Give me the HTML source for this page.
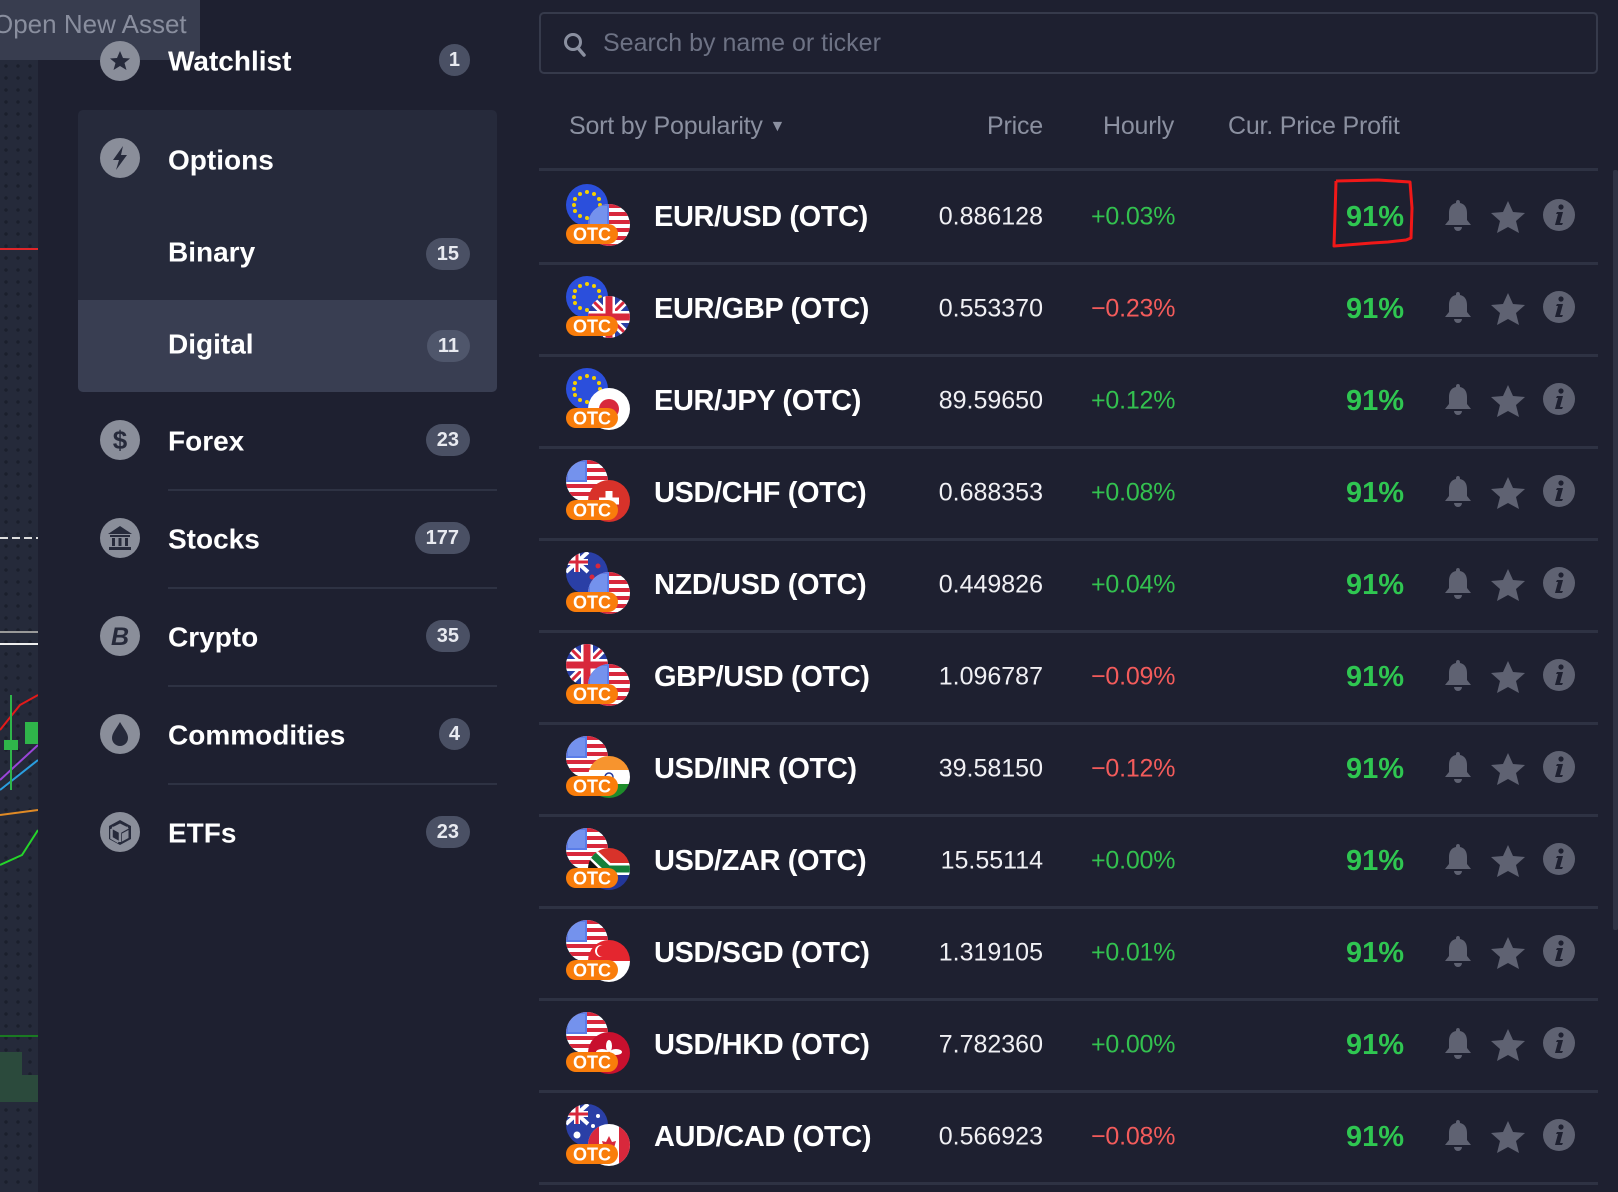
<!DOCTYPE html>
<html><head><meta charset="utf-8"><style>
*{margin:0;padding:0;box-sizing:border-box}
body{width:1618px;height:1192px;background:#1e2030;font-family:"Liberation Sans",sans-serif;position:relative;overflow:hidden;color:#fff}
.abs{position:absolute}
.strip{left:0;top:0;width:38px;height:1192px;background:#252a3a;background-image:radial-gradient(#1b1f2c 1.5px,transparent 2px);background-size:12px 12px}
.tip{left:0;top:0;width:200px;height:60px;background:#3a3f51;opacity:.95}
.tip span{position:absolute;left:-7px;top:9px;font-size:26px;color:#8f94a4;white-space:nowrap}
.opt{left:78px;top:110px;width:419px;height:282px;background:#262a3b;border-radius:5px}
.dig{left:78px;top:300px;width:419px;height:92px;background:#393e52;border-radius:0 0 5px 5px}
.si{position:absolute;left:168px;font-size:28px;font-weight:bold;color:#fff;transform:translateY(-48%)}
.ic{position:absolute;left:100px;width:40px;height:40px;transform:translateY(-50%)}
.bd{position:absolute;right:1148px;height:32px;border-radius:16px;background:#4a5064;color:#e8eaf0;font-weight:bold;font-size:20px;line-height:32px;text-align:center;padding:0 11px;transform:translateY(-50%)}
.sep{position:absolute;left:168px;width:329px;height:2px;background:#2e3243}
.search{left:539px;top:12px;width:1059px;height:62px;border:2px solid #363a4b;border-radius:5px}
.search span{position:absolute;left:62px;top:15px;font-size:25px;color:#6d7284}
.hd{position:absolute;top:112px;font-size:25px;color:#8b90a0;white-space:nowrap;letter-spacing:-0.2px}
.rsep{position:absolute;left:539px;width:1059px;height:3px;background:#2e3243}
.nm{position:absolute;left:654px;font-size:29px;font-weight:bold;transform:translateY(-46%);white-space:nowrap;letter-spacing:-0.4px}
.pr{position:absolute;right:575px;font-size:25px;transform:translateY(-46%);color:#f0f0f4}
.hr{position:absolute;left:1091px;font-size:25px;transform:translateY(-46%);letter-spacing:-0.2px}
.g{color:#33c14f}.r{color:#f35b5b}
.pf{position:absolute;right:214px;font-size:29px;font-weight:bold;color:#2fc651;transform:translateY(-46%)}
.fl{position:absolute;left:565px;width:66px;height:66px}
</style></head><body>
<svg width="0" height="0" style="position:absolute">
<defs>
<clipPath id="cc"><circle cx="21" cy="21" r="21"/></clipPath>
<symbol id="us" viewBox="0 0 42 42"><g clip-path="url(#cc)"><rect width="42" height="42" fill="#fff"/><g fill="#d8283c"><rect y="0" width="42" height="4"/><rect y="8" width="42" height="4"/><rect y="16" width="42" height="4"/><rect y="24" width="42" height="4"/><rect y="32" width="42" height="4"/><rect y="40" width="42" height="4"/></g><rect width="21" height="22" fill="#5a7de8"/><rect x="2" y="2" width="17" height="18" fill="#8ea8f2" opacity=".5"/></g></symbol>
<symbol id="eu" viewBox="0 0 42 42"><g clip-path="url(#cc)"><rect width="42" height="42" fill="#2b4fdc"/><g fill="#f5d000"><circle cx="21" cy="8" r="2"/><circle cx="28" cy="10" r="2"/><circle cx="33" cy="15" r="2"/><circle cx="34" cy="21" r="2"/><circle cx="33" cy="27" r="2"/><circle cx="28" cy="32" r="2"/><circle cx="21" cy="34" r="2"/><circle cx="14" cy="32" r="2"/><circle cx="9" cy="27" r="2"/><circle cx="8" cy="21" r="2"/><circle cx="9" cy="15" r="2"/><circle cx="14" cy="10" r="2"/></g></g></symbol>
<symbol id="gb" viewBox="0 0 42 42"><g clip-path="url(#cc)"><rect width="42" height="42" fill="#2a3fa6"/><path d="M0 0L42 42M42 0L0 42" stroke="#fff" stroke-width="8"/><path d="M0 0L42 42M42 0L0 42" stroke="#d8283c" stroke-width="3"/><path d="M21 0V42M0 21H42" stroke="#fff" stroke-width="12"/><path d="M21 0V42M0 21H42" stroke="#d8283c" stroke-width="7"/></g></symbol>
<symbol id="jp" viewBox="0 0 42 42"><g clip-path="url(#cc)"><rect width="42" height="42" fill="#fff"/><circle cx="21" cy="21" r="10" fill="#d8283c"/></g></symbol>
<symbol id="ch" viewBox="0 0 42 42"><g clip-path="url(#cc)"><rect width="42" height="42" fill="#d8322a"/><path d="M21 11V31M11 21H31" stroke="#fff" stroke-width="7"/></g></symbol>
<symbol id="nz" viewBox="0 0 42 42"><g clip-path="url(#cc)"><rect width="42" height="42" fill="#2a3fa6"/><path d="M0 0L22 20M22 0L0 20" stroke="#fff" stroke-width="4"/><path d="M11 0V20M0 10H22" stroke="#fff" stroke-width="6"/><path d="M11 0V20M0 10H22" stroke="#d8283c" stroke-width="3"/><circle cx="32" cy="14" r="2.5" fill="#d8283c"/><circle cx="26" cy="25" r="2.5" fill="#d8283c"/><circle cx="34" cy="30" r="2.5" fill="#d8283c"/></g></symbol>
<symbol id="in" viewBox="0 0 42 42"><g clip-path="url(#cc)"><rect width="42" height="14" fill="#f7942e"/><rect y="14" width="42" height="14" fill="#fff"/><rect y="28" width="42" height="14" fill="#1e8c2a"/><circle cx="21" cy="21" r="4" fill="none" stroke="#23379a" stroke-width="1.5"/></g></symbol>
<symbol id="za" viewBox="0 0 42 42"><g clip-path="url(#cc)"><rect width="42" height="21" fill="#d8322a"/><rect y="21" width="42" height="21" fill="#23379a"/><path d="M0 2L20 21L0 40M20 21H42" stroke="#fff" stroke-width="12" fill="none"/><path d="M0 2L20 21L0 40M20 21H42" stroke="#15803a" stroke-width="7" fill="none"/><path d="M0 10L11 21L0 32Z" fill="#111"/></g></symbol>
<symbol id="sg" viewBox="0 0 42 42"><g clip-path="url(#cc)"><rect width="42" height="21" fill="#e4262f"/><rect y="21" width="42" height="21" fill="#fff"/><circle cx="13" cy="11" r="6" fill="#fff"/><circle cx="15" cy="11" r="6" fill="#e4262f"/></g></symbol>
<symbol id="hk" viewBox="0 0 42 42"><g clip-path="url(#cc)"><rect width="42" height="42" fill="#c8102e"/><g fill="#fff"><ellipse cx="21" cy="14" rx="3" ry="6"/><ellipse cx="14" cy="20" rx="6" ry="3"/><ellipse cx="28" cy="20" rx="6" ry="3"/><ellipse cx="17" cy="28" rx="3" ry="5"/><ellipse cx="25" cy="28" rx="3" ry="5"/></g></g></symbol>
<symbol id="au" viewBox="0 0 42 42"><g clip-path="url(#cc)"><rect width="42" height="42" fill="#2a3fa6"/><path d="M0 0L22 20M22 0L0 20" stroke="#fff" stroke-width="4"/><path d="M11 0V20M0 10H22" stroke="#fff" stroke-width="6"/><path d="M11 0V20M0 10H22" stroke="#d8283c" stroke-width="3"/><g fill="#fff"><circle cx="11" cy="31" r="3.5"/><circle cx="32" cy="12" r="2"/><circle cx="27" cy="22" r="2"/><circle cx="34" cy="28" r="2"/></g></g></symbol>
<symbol id="ca" viewBox="0 0 42 42"><g clip-path="url(#cc)"><rect width="42" height="42" fill="#fff"/><rect width="11" height="42" fill="#d8283c"/><rect x="31" width="11" height="42" fill="#d8283c"/><path d="M21 12L24 18L28 17L26 24L29 26L21 30L13 26L16 24L14 17L18 18Z" fill="#d8283c"/></g></symbol>
<symbol id="otc" viewBox="0 0 52 20"><rect width="52" height="20" rx="10" fill="#f97d0b"/><text x="26" y="16.5" text-anchor="middle" font-family="Liberation Sans" font-weight="bold" font-size="18" fill="#fff">OTC</text></symbol>
</defs></svg>

<div class="abs strip"></div>
<div class="abs" style="left:0;top:248px;width:38px;height:2px;background:#e0262a"></div>
<div class="abs" style="left:0;top:537px;width:38px;height:2px;background:repeating-linear-gradient(90deg,#ddd 0 8px,transparent 8px 12px)"></div>
<div class="abs" style="left:0;top:631px;width:38px;height:2px;background:#999"></div>
<div class="abs" style="left:0;top:643px;width:38px;height:2px;background:#eee"></div>
<svg class="abs" style="left:0;top:690px" width="38" height="420"><path d="M0 40L20 15L38 5" stroke="#e21a1a" stroke-width="2" fill="none"/><path d="M0 90L38 55" stroke="#9a45d8" stroke-width="2" fill="none"/><path d="M0 100L38 70" stroke="#2a9ee0" stroke-width="2" fill="none"/><path d="M0 125L38 120" stroke="#e08a25" stroke-width="2" fill="none"/><path d="M0 175L22 165L38 140" stroke="#25d52a" stroke-width="2" fill="none"/><rect x="4" y="50" width="14" height="10" fill="#2fb54a"/><rect x="25" y="32" width="13" height="22" fill="#2fb54a"/><rect x="10" y="5" width="2" height="95" fill="#2fb54a"/><rect x="0" y="345" width="38" height="2" fill="#1a7a22"/><rect x="0" y="362" width="22" height="50" fill="#2b4a3c"/><rect x="22" y="385" width="16" height="27" fill="#2b4a3c"/></svg>
<div class="abs tip"><span>Open New Asset</span></div>

<div class="abs opt"></div>
<div class="abs dig"></div>

<svg class="ic" style="top:61px" viewBox="0 0 40 40"><circle cx="20" cy="20" r="20" fill="#8a8e9a"/><path d="M20 10L23 17L30 17.5L24.5 22L26.5 29L20 25L13.5 29L15.5 22L10 17.5L17 17Z" fill="#262a3b"/></svg>
<div class="si" style="top:61px">Watchlist</div><div class="bd" style="top:60px;padding:0 10px">1</div>

<svg class="ic" style="top:158px" viewBox="0 0 40 40"><circle cx="20" cy="20" r="20" fill="#8a8e9a"/><path d="M23 8L13 22H19L16 32L27 17H21Z" fill="#262a3b"/></svg>
<div class="si" style="top:160px">Options</div>
<div class="si" style="top:252px">Binary</div><div class="bd" style="top:254px">15</div>
<div class="si" style="top:344px">Digital</div><div class="bd" style="top:346px;background:#4f566b">11</div>

<svg class="ic" style="top:440px" viewBox="0 0 40 40"><circle cx="20" cy="20" r="20" fill="#8a8e9a"/><text x="20" y="29" text-anchor="middle" font-family="Liberation Sans" font-weight="bold" font-size="26" fill="#262a3b">$</text></svg>
<div class="si" style="top:441px">Forex</div><div class="bd" style="top:440px">23</div>
<div class="sep" style="top:489px"></div>
<svg class="ic" style="top:538px" viewBox="0 0 40 40"><circle cx="20" cy="20" r="20" fill="#8a8e9a"/><path d="M8 16L20 8L32 16Z M10 17H30V19H10Z M12 20H15V28H12Z M18.5 20H21.5V28H18.5Z M25 20H28V28H25Z M9 29H31V32H9Z" fill="#262a3b"/></svg>
<div class="si" style="top:539px">Stocks</div><div class="bd" style="top:538px">177</div>
<div class="sep" style="top:587px"></div>
<svg class="ic" style="top:636px" viewBox="0 0 40 40"><circle cx="20" cy="20" r="20" fill="#8a8e9a"/><text x="20" y="29" text-anchor="middle" font-family="Liberation Sans" font-weight="bold" font-style="italic" font-size="25" fill="#262a3b">B</text></svg>
<div class="si" style="top:637px">Crypto</div><div class="bd" style="top:636px">35</div>
<div class="sep" style="top:685px"></div>
<svg class="ic" style="top:734px" viewBox="0 0 40 40"><circle cx="20" cy="20" r="20" fill="#8a8e9a"/><path d="M20 8C16 15 12 19 12 24A8 8 0 0 0 28 24C28 19 24 15 20 8Z" fill="#262a3b"/></svg>
<div class="si" style="top:735px">Commodities</div><div class="bd" style="top:734px;padding:0 10px">4</div>
<div class="sep" style="top:783px"></div>
<svg class="ic" style="top:832px" viewBox="0 0 40 40"><circle cx="20" cy="20" r="20" fill="#8a8e9a"/><path d="M20 8L31 14V27L20 33L9 27V14Z" fill="#262a3b"/><path d="M12 15.5L20 20L28 15.5M20 20V30M11.5 17V26L18.5 30" stroke="#8a8e9a" stroke-width="2.5" fill="none"/><path d="M20 11.5L27 15L20 19L13 15Z" fill="#8a8e9a"/><path d="M22 21.5L28.5 18V26L22 29.5Z" fill="#8a8e9a"/></svg>
<div class="si" style="top:833px">ETFs</div><div class="bd" style="top:832px">23</div>

<div class="abs search"><svg style="position:absolute;left:22px;top:18px" width="24" height="26" viewBox="0 0 24 26"><circle cx="10" cy="10" r="7.5" stroke="#8b90a0" stroke-width="3" fill="none"/><path d="M15 16L21 23" stroke="#8b90a0" stroke-width="3.5" stroke-linecap="round"/></svg><span>Search by name or ticker</span></div>

<div class="hd" style="left:569px">Sort by Popularity <span style="font-size:16px;position:relative;top:-3px">▼</span></div>
<div class="hd" style="right:575px">Price</div>
<div class="hd" style="left:1103px">Hourly</div>
<div class="hd" style="left:1228px">Cur. Price Profit</div>
<div class="abs" style="left:1613px;top:170px;width:5px;height:760px;background:#2f3344;border-radius:2px"></div>

<div class="rsep" style="top:168px"></div>

<svg class="fl" style="top:182px"><use href="#eu" x="1" y="2" width="42" height="42"/><use href="#us" x="23" y="22" width="42" height="42"/><use href="#otc" x="1" y="42" width="52" height="20"/></svg>
<div class="nm" style="top:216px">EUR/USD (OTC)</div><div class="pr" style="top:216px">0.886128</div><div class="hr g" style="top:216px">+0.03%</div><div class="pf" style="top:216px">91%</div>
<div class="rsep" style="top:262px"></div>

<svg class="fl" style="top:274px"><use href="#eu" x="1" y="2" width="42" height="42"/><use href="#gb" x="23" y="22" width="42" height="42"/><use href="#otc" x="1" y="42" width="52" height="20"/></svg>
<div class="nm" style="top:308px">EUR/GBP (OTC)</div><div class="pr" style="top:308px">0.553370</div><div class="hr r" style="top:308px">−0.23%</div><div class="pf" style="top:308px">91%</div>
<div class="rsep" style="top:354px"></div>

<svg class="fl" style="top:366px"><use href="#eu" x="1" y="2" width="42" height="42"/><use href="#jp" x="23" y="22" width="42" height="42"/><use href="#otc" x="1" y="42" width="52" height="20"/></svg>
<div class="nm" style="top:400px">EUR/JPY (OTC)</div><div class="pr" style="top:400px">89.59650</div><div class="hr g" style="top:400px">+0.12%</div><div class="pf" style="top:400px">91%</div>
<div class="rsep" style="top:446px"></div>

<svg class="fl" style="top:458px"><use href="#us" x="1" y="2" width="42" height="42"/><use href="#ch" x="23" y="22" width="42" height="42"/><use href="#otc" x="1" y="42" width="52" height="20"/></svg>
<div class="nm" style="top:492px">USD/CHF (OTC)</div><div class="pr" style="top:492px">0.688353</div><div class="hr g" style="top:492px">+0.08%</div><div class="pf" style="top:492px">91%</div>
<div class="rsep" style="top:538px"></div>

<svg class="fl" style="top:550px"><use href="#nz" x="1" y="2" width="42" height="42"/><use href="#us" x="23" y="22" width="42" height="42"/><use href="#otc" x="1" y="42" width="52" height="20"/></svg>
<div class="nm" style="top:584px">NZD/USD (OTC)</div><div class="pr" style="top:584px">0.449826</div><div class="hr g" style="top:584px">+0.04%</div><div class="pf" style="top:584px">91%</div>
<div class="rsep" style="top:630px"></div>

<svg class="fl" style="top:642px"><use href="#gb" x="1" y="2" width="42" height="42"/><use href="#us" x="23" y="22" width="42" height="42"/><use href="#otc" x="1" y="42" width="52" height="20"/></svg>
<div class="nm" style="top:676px">GBP/USD (OTC)</div><div class="pr" style="top:676px">1.096787</div><div class="hr r" style="top:676px">−0.09%</div><div class="pf" style="top:676px">91%</div>
<div class="rsep" style="top:722px"></div>

<svg class="fl" style="top:734px"><use href="#us" x="1" y="2" width="42" height="42"/><use href="#in" x="23" y="22" width="42" height="42"/><use href="#otc" x="1" y="42" width="52" height="20"/></svg>
<div class="nm" style="top:768px">USD/INR (OTC)</div><div class="pr" style="top:768px">39.58150</div><div class="hr r" style="top:768px">−0.12%</div><div class="pf" style="top:768px">91%</div>
<div class="rsep" style="top:814px"></div>

<svg class="fl" style="top:826px"><use href="#us" x="1" y="2" width="42" height="42"/><use href="#za" x="23" y="22" width="42" height="42"/><use href="#otc" x="1" y="42" width="52" height="20"/></svg>
<div class="nm" style="top:860px">USD/ZAR (OTC)</div><div class="pr" style="top:860px">15.55114</div><div class="hr g" style="top:860px">+0.00%</div><div class="pf" style="top:860px">91%</div>
<div class="rsep" style="top:906px"></div>

<svg class="fl" style="top:918px"><use href="#us" x="1" y="2" width="42" height="42"/><use href="#sg" x="23" y="22" width="42" height="42"/><use href="#otc" x="1" y="42" width="52" height="20"/></svg>
<div class="nm" style="top:952px">USD/SGD (OTC)</div><div class="pr" style="top:952px">1.319105</div><div class="hr g" style="top:952px">+0.01%</div><div class="pf" style="top:952px">91%</div>
<div class="rsep" style="top:998px"></div>

<svg class="fl" style="top:1010px"><use href="#us" x="1" y="2" width="42" height="42"/><use href="#hk" x="23" y="22" width="42" height="42"/><use href="#otc" x="1" y="42" width="52" height="20"/></svg>
<div class="nm" style="top:1044px">USD/HKD (OTC)</div><div class="pr" style="top:1044px">7.782360</div><div class="hr g" style="top:1044px">+0.00%</div><div class="pf" style="top:1044px">91%</div>
<div class="rsep" style="top:1090px"></div>

<svg class="fl" style="top:1102px"><use href="#au" x="1" y="2" width="42" height="42"/><use href="#ca" x="23" y="22" width="42" height="42"/><use href="#otc" x="1" y="42" width="52" height="20"/></svg>
<div class="nm" style="top:1136px">AUD/CAD (OTC)</div><div class="pr" style="top:1136px">0.566923</div><div class="hr r" style="top:1136px">−0.08%</div><div class="pf" style="top:1136px">91%</div>
<div class="rsep" style="top:1182px"></div>

<svg class="abs" style="left:1438px;top:0" width="170" height="1192">
<defs><g id="acts" fill="#5f6272">
<path d="M20 2C22 2 22 4 22 5C27 6 29 10 29 15V22L33 27H7L11 22V15C11 10 13 6 18 5C18 4 18 2 20 2Z M16 29H24A4 4 0 0 1 16 29Z"/>
<path d="M70 3L75 14L87 15L78 23L81 35L70 29L59 35L62 23L53 15L65 14Z"/>
<circle cx="121" cy="17" r="16"/>
<circle cx="123" cy="9" r="2.6" fill="#1e2030"/><path d="M119 14H125L122 25H125L124 27H117L120 16H118Z" fill="#1e2030"/>
</g></defs>
<use href="#acts" y="198"/><use href="#acts" y="290"/><use href="#acts" y="382"/><use href="#acts" y="474"/><use href="#acts" y="566"/><use href="#acts" y="658"/><use href="#acts" y="750"/><use href="#acts" y="842"/><use href="#acts" y="934"/><use href="#acts" y="1026"/><use href="#acts" y="1118"/>
</svg>

<svg class="abs" style="left:1328px;top:176px" width="95" height="80"><path d="M8 5L50 4L82 6L84 32L83 62L78 64L60 66L44 67L6 70L7 40L8 5" stroke="#f01818" stroke-width="3" fill="none" stroke-linejoin="round"/></svg>
</body></html>
